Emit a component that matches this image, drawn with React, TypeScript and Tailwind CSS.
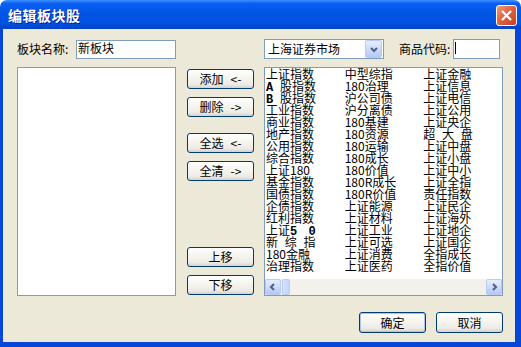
const FONT = "font-['Noto_Sans_CJK_SC','SimSun',sans-serif]"

const col1 = ['上证指数', '*A 股指数', '*B 股指数', '工业指数', '商业指数', '地产指数', '公用指数', '综合指数', '上证180', '基金指数', '国债指数', '企债指数', '红利指数', '上证#5 0', '新 综 指', '180金融', '治理指数']
const col2 = ['中型综指', '180治理', '沪公司债', '沪分离债', '180基建', '180资源', '180运输', '180成长', '180价值', '180R成长', '180R价值', '上证能源', '上证材料', '上证工业', '上证可选', '上证消费', '上证医药']
const col3 = ['上证金融', '上证信息', '上证电信', '上证公用', '上证央企', '超 大 盘', '上证中盘', '上证小盘', '上证中小', '上证全指', '责任指数', '上证民企', '上证海外', '上证地企', '上证国企', '全指成长', '全指价值']

// 带粗体字母的项目: "*A 股指数" -> 粗体 A, "上证#5 0" -> 粗体 5 0
function ItemText({ item }: { item: string }) {
  if (item.startsWith('*')) {
    return (
      <>
        <span className="font-['Liberation_Mono',monospace] font-bold">{item[1]}</span>
        {item.slice(2)}
      </>
    )
  }
  const idx = item.indexOf('#')
  if (idx >= 0) {
    return (
      <>
        {item.slice(0, idx)}
        <span className="font-['Liberation_Mono',monospace] font-bold">{item.slice(idx + 1)}</span>
      </>
    )
  }
  return <>{item}</>
}

function XpButton({ children, className = '' }: { children: React.ReactNode; className?: string }) {
  return (
    <div
      className={`flex w-[67px] items-center justify-center rounded-[3px] border border-[#003C74] bg-[linear-gradient(180deg,#FFFFFF_0%,#F6F5F0_40%,#ECEBE5_80%,#D8D2C6_100%)] text-[12px] leading-none text-black ${className}`}
    >
      {children}
    </div>
  )
}

function Arrow({ dir }: { dir: 'left' | 'right' | 'down' }) {
  const d =
    dir === 'left' ? 'M6 2 L3 5 L6 8' : dir === 'right' ? 'M4 2 L7 5 L4 8' : 'M2 4 L5 7 L8 4'
  return (
    <svg width="10" height="10" viewBox="0 0 10 10">
      <path d={d} fill="none" stroke="#4D6185" strokeWidth="2" />
    </svg>
  )
}

export default function App() {
  return (
    <div className={`flex h-[347px] w-[521px] flex-col overflow-hidden bg-white ${FONT}`}>
      {/* 标题栏 */}
      <div className="relative flex h-[29px] shrink-0 items-center rounded-t-[7px] bg-[linear-gradient(180deg,#3D8FFF_0%,#0A5FF2_12%,#0055E5_45%,#0052E0_80%,#0042C8_100%)] pl-[8px]">
        <span className="text-[14px] font-bold leading-none tracking-[0.5px] text-white [text-shadow:1px_1px_0_#0A1E8C]">
          编辑板块股
        </span>
        <div className="absolute top-[5px] left-[496px] flex h-[21px] w-[21px] items-center justify-center rounded-[3px] border border-white bg-[linear-gradient(135deg,#F09A7C_0%,#E06440_45%,#C8401C_100%)]">
          <svg width="13" height="13" viewBox="0 0 13 13">
            <path d="M2 2 L11 11 M11 2 L2 11" stroke="white" strokeWidth="2.2" />
          </svg>
        </div>
      </div>

      {/* 内容 */}
      <div className="flex flex-1 flex-col border-r-[6px] border-b-[5px] border-l-[3px] border-[#0846DA] bg-[#ECE9D8] pt-[10px] pl-[14px] text-[12px] text-black">
        {/* 第一行 */}
        <div className="flex h-[20px] items-center">
          <div className="flex w-[159px] items-center">
            <span className="leading-none">板块名称:</span>
            <div className="ml-auto h-[19px] w-[100px] self-start border border-[#7F9DB9] bg-white pl-[1px] leading-[14px]">
              新板块
            </div>
          </div>
          <div className="ml-[88px] flex h-[20px] w-[120px] items-center border border-[#7F9DB9] bg-white">
            <span className="pl-[3px] leading-none">上海证券市场</span>
            <div className="mr-[1px] ml-auto flex h-[18px] w-[17px] items-center justify-center rounded-[2px] border border-[#B9CBF2] bg-[linear-gradient(180deg,#E6EEFD_0%,#C9D8FA_60%,#B3C8F5_100%)]">
              <Arrow dir="down" />
            </div>
          </div>
          <span className="ml-[15px] leading-none">商品代码:</span>
          <div className="ml-[3px] flex h-[20px] w-[47px] items-start border border-[#7F9DB9] bg-white pt-[2px] pl-[1px]">
            <div className="h-[12px] w-[1px] bg-black" />
          </div>
        </div>

        {/* 第二行 */}
        <div className="mt-[8px] flex h-[229px]">
          <div className="w-[159px] border border-[#7F9DB9] bg-white" />

          <div className="ml-[11px] flex w-[67px] flex-col pt-[2px] pb-[1px]">
            <XpButton className="h-[20px]">
              添加<span className="ml-[7px]">&lt;-</span>
            </XpButton>
            <XpButton className="mt-[8px] h-[20px]">
              删除<span className="ml-[7px]">-&gt;</span>
            </XpButton>
            <XpButton className="mt-[16px] h-[20px]">
              全选<span className="ml-[7px]">&lt;-</span>
            </XpButton>
            <XpButton className="mt-[8px] h-[20px]">
              全清<span className="ml-[7px]">-&gt;</span>
            </XpButton>
            <XpButton className="mt-auto h-[20px]">上移</XpButton>
            <XpButton className="mt-[8px] h-[20px]">下移</XpButton>
          </div>

          <div className="ml-[10px] flex w-[239px] flex-col border border-[#7F9DB9] bg-white">
            <div className="flex flex-1 pl-[1px]">
              {[col1, col2, col3].map((col, i) => (
                <div key={i} className="flex w-[80px] flex-col">
                  {col.map((item) => (
                    <div key={item} className="h-[12px] text-[12px] leading-[12px] whitespace-pre [word-spacing:4px]">
                      <ItemText item={item} />
                    </div>
                  ))}
                </div>
              ))}
            </div>
            {/* 横向滚动条 */}
            <div className="flex h-[16px] items-stretch bg-[#F3F1EC]">
              <div className="flex w-[16px] items-center justify-center rounded-[2px] border border-[#B9CBF2] bg-[linear-gradient(180deg,#E6EEFD_0%,#C9D8FA_60%,#B3C8F5_100%)]">
                <Arrow dir="left" />
              </div>
              <div className="ml-[1px] w-[8px] rounded-[2px] border border-[#B9CBF2] bg-[linear-gradient(90deg,#D6E2FC_0%,#C3D4FA_100%)]" />
              <div className="ml-auto flex w-[16px] items-center justify-center rounded-[2px] border border-[#B9CBF2] bg-[linear-gradient(180deg,#E6EEFD_0%,#C9D8FA_60%,#B3C8F5_100%)]">
                <Arrow dir="right" />
              </div>
            </div>
          </div>
        </div>

        {/* 底部按钮 */}
        <div className="mt-[16px] flex pl-[342px]">
          <XpButton className="h-[21px] border-[#2C5BC4] shadow-[inset_0_0_0_1px_#A8C4F0]">确定</XpButton>
          <XpButton className="ml-[10px] h-[21px]">取消</XpButton>
        </div>
      </div>
    </div>
  )
}
